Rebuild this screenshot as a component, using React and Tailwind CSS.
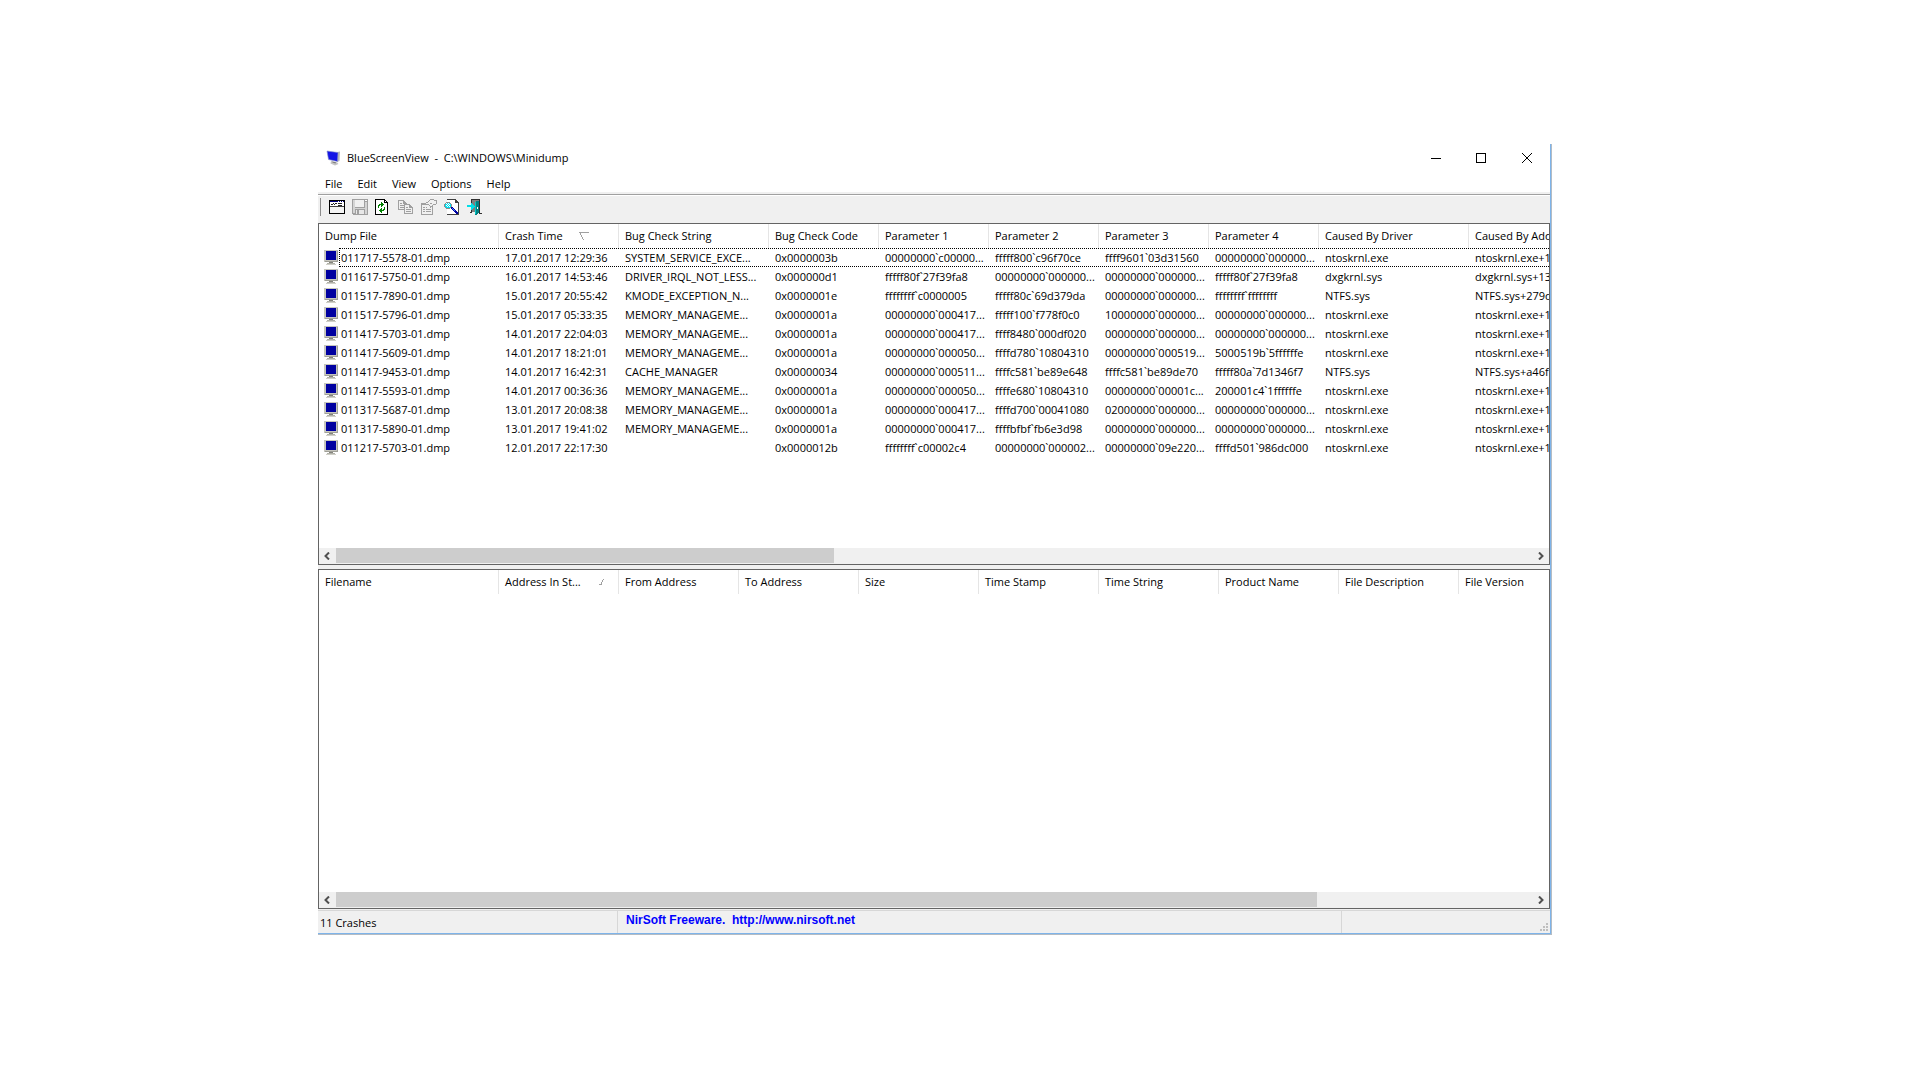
const MENUS = ['File', 'Edit', 'View', 'Options', 'Help'];

const CRASH_COLUMNS = [
  { label: 'Dump File',         width: 'w-[180px]' },
  { label: 'Crash Time',        width: 'w-[120px]', sort: 'desc' },
  { label: 'Bug Check String',  width: 'w-[150px]' },
  { label: 'Bug Check Code',    width: 'w-[110px]' },
  { label: 'Parameter 1',       width: 'w-[110px]' },
  { label: 'Parameter 2',       width: 'w-[110px]' },
  { label: 'Parameter 3',       width: 'w-[110px]' },
  { label: 'Parameter 4',       width: 'w-[110px]' },
  { label: 'Caused By Driver',  width: 'w-[150px]' },
  { label: 'Caused By Address', width: 'w-[150px]' },
];

const MODULE_COLUMNS = [
  { label: 'Filename',         width: 'w-[180px]' },
  { label: 'Address In St...', width: 'w-[120px]', sort: 'asc' },
  { label: 'From Address',     width: 'w-[120px]' },
  { label: 'To Address',       width: 'w-[120px]' },
  { label: 'Size',             width: 'w-[120px]' },
  { label: 'Time Stamp',       width: 'w-[120px]' },
  { label: 'Time String',      width: 'w-[120px]' },
  { label: 'Product Name',     width: 'w-[120px]' },
  { label: 'File Description', width: 'w-[120px]' },
  { label: 'File Version',     width: 'w-[120px]' },
];

const CRASHES = [
  ['011717-5578-01.dmp', '17.01.2017 12:29:36', 'SYSTEM_SERVICE_EXCE...', '0x0000003b', '00000000`c00000...', 'fffff800`c96f70ce', 'ffff9601`03d31560', '00000000`000000...', 'ntoskrnl.exe', 'ntoskrnl.exe+14e7c0'],
  ['011617-5750-01.dmp', '16.01.2017 14:53:46', 'DRIVER_IRQL_NOT_LESS...', '0x000000d1', 'fffff80f`27f39fa8', '00000000`000000...', '00000000`000000...', 'fffff80f`27f39fa8', 'dxgkrnl.sys', 'dxgkrnl.sys+139fa8'],
  ['011517-7890-01.dmp', '15.01.2017 20:55:42', 'KMODE_EXCEPTION_N...', '0x0000001e', 'ffffffff`c0000005', 'fffff80c`69d379da', '00000000`000000...', 'ffffffff`ffffffff', 'NTFS.sys', 'NTFS.sys+279da'],
  ['011517-5796-01.dmp', '15.01.2017 05:33:35', 'MEMORY_MANAGEME...', '0x0000001a', '00000000`000417...', 'fffff100`f778f0c0', '10000000`000000...', '00000000`000000...', 'ntoskrnl.exe', 'ntoskrnl.exe+14e7c0'],
  ['011417-5703-01.dmp', '14.01.2017 22:04:03', 'MEMORY_MANAGEME...', '0x0000001a', '00000000`000417...', 'ffff8480`000df020', '00000000`000000...', '00000000`000000...', 'ntoskrnl.exe', 'ntoskrnl.exe+14e7c0'],
  ['011417-5609-01.dmp', '14.01.2017 18:21:01', 'MEMORY_MANAGEME...', '0x0000001a', '00000000`000050...', 'ffffd780`10804310', '00000000`000519...', '5000519b`5ffffffe', 'ntoskrnl.exe', 'ntoskrnl.exe+14e7c0'],
  ['011417-9453-01.dmp', '14.01.2017 16:42:31', 'CACHE_MANAGER', '0x00000034', '00000000`000511...', 'ffffc581`be89e648', 'ffffc581`be89de70', 'fffff80a`7d1346f7', 'NTFS.sys', 'NTFS.sys+a46f7'],
  ['011417-5593-01.dmp', '14.01.2017 00:36:36', 'MEMORY_MANAGEME...', '0x0000001a', '00000000`000050...', 'ffffe680`10804310', '00000000`00001c...', '200001c4`1ffffffe', 'ntoskrnl.exe', 'ntoskrnl.exe+14e7c0'],
  ['011317-5687-01.dmp', '13.01.2017 20:08:38', 'MEMORY_MANAGEME...', '0x0000001a', '00000000`000417...', 'ffffd700`00041080', '02000000`000000...', '00000000`000000...', 'ntoskrnl.exe', 'ntoskrnl.exe+14e7c0'],
  ['011317-5890-01.dmp', '13.01.2017 19:41:02', 'MEMORY_MANAGEME...', '0x0000001a', '00000000`000417...', 'ffffbfbf`fb6e3d98', '00000000`000000...', '00000000`000000...', 'ntoskrnl.exe', 'ntoskrnl.exe+14e7c0'],
  ['011217-5703-01.dmp', '12.01.2017 22:17:30', '', '0x0000012b', 'ffffffff`c00002c4', '00000000`000002...', '00000000`09e220...', 'ffffd501`986dc000', 'ntoskrnl.exe', 'ntoskrnl.exe+14e7c0'],
];

const TOOLS = [
  { label: 'Advanced Options', Icon: WindowIcon },
  { label: 'Save',             Icon: SaveIcon },
  { label: 'Refresh',          Icon: RefreshIcon },
  { label: 'Copy',             Icon: CopyIcon },
  { label: 'Properties',       Icon: PropertiesIcon },
  { label: 'Find',             Icon: FindIcon },
  { label: 'Exit',             Icon: ExitIcon },
];

export default function App() {
  return (
    <div className="min-h-screen flex flex-col bg-white pt-36 pb-[145px] pl-[318px] pr-[368px] font-['Open_Sans','Noto_Sans',sans-serif] text-[11px] leading-4 text-black">
      <div className="flex-1 flex flex-col min-w-0 border-r border-b border-[#b4bcc4]">
        <div className="flex-1 flex flex-col min-w-0 bg-[#f0f0f0] border-r border-b border-[#7eb4ea]">
          <TitleBar />
          <MenuBar />
          <Toolbar />

          <main className="flex-1 flex flex-col gap-1 min-w-0">
            <Pane className="h-[342px]" thumb="w-5/12">
              <ListTable columns={CRASH_COLUMNS} rows={CRASHES} caption="Crashes" />
            </Pane>
            <Pane className="flex-1" thumb="w-[82%]">
              <ListTable columns={MODULE_COLUMNS} rows={[]} caption="Modules" />
            </Pane>
          </main>

          <StatusBar />
        </div>
      </div>
    </div>
  );
}

function TitleBar() {
  return (
    <header className="h-7 flex items-center bg-white pl-2">
      <AppIcon />
      <h1 className="pl-[5px] flex-1 text-[11px] whitespace-pre">BlueScreenView  -  C:\WINDOWS\Minidump</h1>
      <button aria-label="Minimize" className="w-[45px] h-full flex items-center justify-center">
        <svg width="10" height="10" shapeRendering="crispEdges"><rect y="5" width="10" height="1" /></svg>
      </button>
      <button aria-label="Maximize" className="w-[46px] h-full flex items-center justify-center">
        <svg width="10" height="10" shapeRendering="crispEdges">
          <rect x="0.5" y="0.5" width="9" height="9" fill="none" stroke="#000" />
        </svg>
      </button>
      <button aria-label="Close" className="w-[46px] h-full flex items-center justify-center">
        <svg width="10" height="10"><path d="M0 0L10 10M10 0L0 10" stroke="#000" /></svg>
      </button>
    </header>
  );
}

function MenuBar() {
  return (
    <nav className="h-5 flex items-center gap-[15px] bg-white pl-[7px] pt-[3px]">
      {MENUS.map(menu => (
        <button key={menu}>{menu}</button>
      ))}
    </nav>
  );
}

function Toolbar() {
  return (
    <div className="h-[31px] flex flex-col pt-0.5">
      <div className="border-t border-[#a0a0a0] border-b border-b-white h-0.5" />
      <div className="flex-1 flex items-center gap-[7px] pl-0.5 pb-[6px]">
        <div className="w-px h-[18px] mr-px bg-[#8c8c8c]" />
        {TOOLS.map(({ label, Icon }) => (
          <button key={label} aria-label={label}><Icon /></button>
        ))}
      </div>
    </div>
  );
}

function Pane({ className, thumb, children }) {
  return (
    <section className={`flex flex-col min-w-0 bg-white border border-[#646464] ${className}`}>
      <div className="flex-1 overflow-hidden">{children}</div>
      {/* Horizontal scrollbar */}
      <div className="h-4 flex bg-[#f0f0f0]">
        <button aria-label="Scroll left" className="w-[17px] pr-0.5 flex items-center justify-center">
          <Chevron d="M5 0.5L1.5 4L5 7.5" />
        </button>
        <div className="flex-1 pb-px">
          <div className={`h-full bg-[#cdcdcd] ${thumb}`} />
        </div>
        <button aria-label="Scroll right" className="w-[17px] flex items-center justify-center">
          <Chevron d="M1 0.5L4.5 4L1 7.5" />
        </button>
      </div>
    </section>
  );
}

function ListTable({ columns, rows, caption }) {
  return (
    <table className="table-fixed w-0 border-separate border-spacing-0 text-left" aria-label={caption}>
      <thead>
        <tr className="h-6">
          {columns.map(({ label, width, sort }) => (
            <th key={label} className={`${width} p-0 pl-1.5 font-normal whitespace-nowrap border-r border-[#e5e5e5]`}>
              <span className="flex items-center">
                {label}
                {sort === 'desc' && <SortDescIcon />}
                {sort === 'asc' && <SortAscIcon />}
              </span>
            </th>
          ))}
        </tr>
      </thead>
      <tbody>
        {rows.map((row, i) => (
          <tr key={row[0]} className="relative h-[19px]">
            {row.map((cell, j) => (
              <td key={j} className="p-0 pl-1.5 whitespace-nowrap">
                {j === 0 ? (
                  <span className="flex items-center gap-[3px] -ml-px">
                    <MonitorIcon />
                    {cell}
                    {/* focus rectangle */}
                    {i === 0 && <span className="absolute left-5 right-0 inset-y-0 border border-dotted border-black" />}
                  </span>
                ) : cell}
              </td>
            ))}
          </tr>
        ))}
      </tbody>
    </table>
  );
}

function StatusBar() {
  return (
    <footer className="h-6 flex pt-px">
      <div className="flex-1 flex border-t border-[#d7d7d7]">
        <div className="w-[300px] flex items-center pl-0.5 pt-0.5 border-r border-[#d7d7d7]">11 Crashes</div>
        <div className="flex-1 pl-2 pt-px border-r border-[#d7d7d7]">
          <a href="http://www.nirsoft.net" className="font-['Liberation_Sans',Arial,sans-serif] font-bold text-xs text-[#0000ff] whitespace-pre">NirSoft Freeware.  http://www.nirsoft.net</a>
        </div>
        <div className="w-[208px] flex items-end justify-end p-0.5">
          <svg width="8" height="8" fill="#bfbfbf" shapeRendering="crispEdges">
            <path d="M6 0h2v2h-2zM3 3h2v2h-2zM6 3h2v2h-2zM0 6h2v2h-2zM3 6h2v2h-2zM6 6h2v2h-2z" />
          </svg>
        </div>
      </div>
    </footer>
  );
}

function Chevron({ d }) {
  return (
    <svg width="6" height="8" viewBox="0 0 6 8"><path d={d} fill="none" stroke="#505050" strokeWidth="2" /></svg>
  );
}

function SortDescIcon() {
  return (
    <svg className="ml-4" width="10" height="8" fill="none" stroke="#a0a0a0" shapeRendering="crispEdges">
      <path d="M0 0.5H10M1.5 1V3M2.5 3V5M3.5 5V7M4.5 7V8" />
    </svg>
  );
}

function SortAscIcon() {
  return (
    <svg className="ml-[18px]" width="6" height="6" fill="none" stroke="#a0a0a0" shapeRendering="crispEdges">
      <path d="M0 5.5H3M2.5 3V5M3.5 1V3M4 0.5H5" />
    </svg>
  );
}

function AppIcon() {
  return (
    <svg width="16" height="16" viewBox="0 0 16 16">
      <path d="M11.5 2L14 1.5L13.5 11L11 12z" fill="#b8b8b8" />
      <path d="M1 1L12 2.5L11.5 11.5L2.5 9.5z" fill="#1414e6" stroke="#8c96c8" strokeWidth="0.6" />
      <path d="M5 11L11 12.2L12.5 14L9 15.5L4.5 13.5z" fill="#c4c4c4" />
      <path d="M6 11.4L10 12.2L9.5 13.4L6.5 12.6z" fill="#7c7c7c" />
    </svg>
  );
}

function MonitorIcon() {
  return (
    <svg width="14" height="15" shapeRendering="crispEdges">
      <path d="M0 0h14v12h-14z" fill="#c6c6be" />
      <path d="M13 1h1v11h-13v-1h12z" fill="#a0a098" />
      <path d="M2 1h10v9h-10z" fill="#0000a0" />
      <path d="M5 12h4v1h-4z" fill="#84847c" />
      <path d="M3 13h8v1h-8z" fill="#b0b0a8" />
      <path d="M2 14h10v1h-10z" fill="#d0d0c8" />
    </svg>
  );
}

function WindowIcon() {
  return (
    <svg width="16" height="16" shapeRendering="crispEdges">
      <path d="M0 1h16v14h-16z" fill="#000" />
      <path d="M1 3h14v11h-14z" fill="#fff" />
      <path d="M1 2h14v1h-14z" fill="#000080" />
      <path d="M9 2h1v1h-1zM11 2h1v1h-1zM13 2h1v1h-1z" fill="#fff" />
      <path d="M2 5h2v1h-2zM5 5h1v1h-1zM4 4h1v1h-1zM6 4h2v1h-2zM9 4h4v1h-4zM9 6h4v1h-4z" fill="#202020" />
      <path d="M1 7h14v1h-14z" fill="#404040" />
      <path d="M1 8h14v6h-14z" fill="#f4f4f4" />
    </svg>
  );
}

function SaveIcon() {
  return (
    <svg width="16" height="16" shapeRendering="crispEdges">
      <path d="M0 0h16v16h-15v-1h-1z" fill="#a0a0a0" />
      <path d="M1 1h2v13h-2zM13 3h2v12h-2z" fill="#d4d4d4" />
      <path d="M3 1h9v7h-9z" fill="#f0f0f0" />
      <path d="M13 1h2v1h-2z" fill="#fff" />
      <path d="M2 9h12v1h-12z" fill="#d4d4d4" />
      <path d="M4 11h8v4h-8z" fill="#e8e8e8" />
      <path d="M5 11h2v4h-2z" fill="#a0a0a0" />
    </svg>
  );
}

function RefreshIcon() {
  return (
    <svg width="16" height="16" shapeRendering="crispEdges">
      <path d="M0 0h10v1h1v1h1v1h1v13h-13z" fill="#000" />
      <path d="M1 1h8v3h3v11h-11z" fill="#fff" />
      <path d="M10 2h1v1h-1z" fill="#fff" />
      {/* upper arrow, then the same one turned round */}
      <path d="M6 3h1v1h1v1h1v1h-1v1h-1v1h-1v-2h-1v1h-1v2h-1v-3h1v-1h2z" fill="#008000" />
      <path d="M7 14h-1v-1h-1v-1h-1v-1h1v-1h1v-1h1v2h1v-1h1v-2h1v3h-1v1h-2z" fill="#008000" />
    </svg>
  );
}

function CopyIcon() {
  return (
    <svg width="16" height="16" shapeRendering="crispEdges" fill="#a0a0a0">
      <path d="M0 1h6v1h1v1h1v1h1v7h-9zM1 2v8h7v-5h-3v-3z" fillRule="evenodd" />
      <path d="M2 4h2v1h-2zM2 6h4v1h-4zM2 8h4v1h-4z" />
      <path d="M6 5h6l3 3v7h-9z" fill="#f0f0f0" />
      <path d="M6 5h6v1h1v1h1v1h1v7h-9zM7 6v8h7v-5h-3v-3z" fillRule="evenodd" />
      <path d="M8 8h2v1h-2zM8 10h5v1h-5zM8 12h5v1h-5z" />
    </svg>
  );
}

function PropertiesIcon() {
  return (
    <svg width="16" height="16" shapeRendering="crispEdges" fill="#a0a0a0">
      <path d="M0 4h12v12h-12zM1 6v9h10v-9z" fillRule="evenodd" />
      <path d="M2 8h2v1h-2zM5 8h5v1h-5zM2 10h2v1h-2zM5 10h5v1h-5zM2 12h2v1h-2zM5 12h5v1h-5z" />
      <path d="M4 4h3l3-4h6v5h-4l-4 4h-2z" fill="#f0f0f0" />
      <path d="M9 0h4v1h-4zM8 1h1v1h-1zM7 2h1v1h-1zM5 3h2v1h-2zM4 4h1v1h-1zM5 5h3v1h-3zM13 1h3v1h-3zM15 2h1v3h-1zM12 5h3v1h-3zM11 6h1v1h-1zM9 7h2v1h-2zM8 6h1v1h-1zM9 4h2v1h-2z" />
    </svg>
  );
}

function FindIcon() {
  return (
    <svg width="16" height="16" shapeRendering="crispEdges">
      <path d="M3 0h9v1h1v1h1v1h1v13h-12z" fill="#404040" />
      <path d="M3 1h8v3h3v11h-11z" fill="#fff" />
      <path d="M2 3h4v1h1v1h1v3h-1v1h-1v1h-4v-1h-1v-1h-1v-3h1v-1h1z" fill="#8c8c8c" />
      <path d="M2 4h4v1h1v3h-1v1h-4v-1h-1v-3h1z" fill="#00e0f0" />
      <path d="M2 4h1v1h-1zM4 4h1v1h-1zM3 5h1v1h-1zM5 5h1v1h-1zM2 6h1v1h-1zM4 6h1v1h-1zM3 7h1v1h-1zM5 7h1v1h-1z" fill="#fff" />
      <path d="M7 8h2v1h1v1h1v1h1v1h1v1h1v2h-2v-1h-1v-1h-1v-1h-1v-1h-1v-1h-1z" fill="#0000a0" />
      <path d="M8 9h1v1h1v1h1v1h-1v-1h-1v-1h-1z" fill="#4080ff" />
    </svg>
  );
}

function ExitIcon() {
  return (
    <svg width="16" height="16" shapeRendering="crispEdges">
      <path d="M4 0h9v14h2v1h-3v-14h-7v13h-2v-1h1z" fill="#303030" />
      <path d="M5 1h7v12h-7z" fill="#808080" />
      <path d="M8 3h1v-1h3v12h-1v1h-1v1h-2z" fill="#008080" />
      <path d="M8 3h1v12h-1z" fill="#00c8c8" />
      <path d="M10 8h1v2h-1z" fill="#fff" />
      <path d="M0 6h4v-2h1v1h1v1h1v1h1v1h-1v1h-1v1h-1v1h-1v-3h-4z" fill="#00e0e8" />
    </svg>
  );
}
